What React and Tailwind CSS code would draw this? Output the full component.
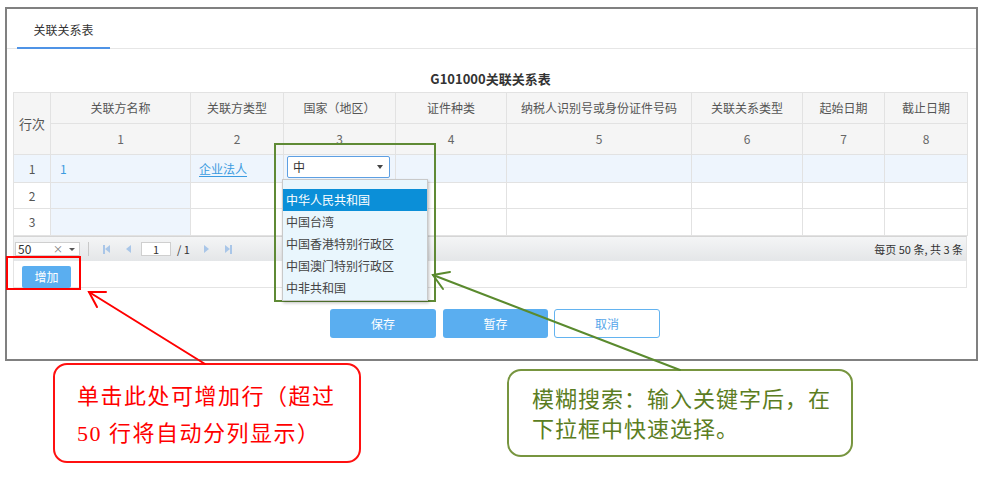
import React from "react";

const columns = [
  { name: "关联方名称", no: 1 },
  { name: "关联方类型", no: 2 },
  { name: "国家（地区）", no: 3 },
  { name: "证件种类", no: 4 },
  { name: "纳税人识别号或身份证件号码", no: 5 },
  { name: "关联关系类型", no: 6 },
  { name: "起始日期", no: 7 },
  { name: "截止日期", no: 8 },
];

const widths = [37, 140, 93, 112, 111, 185, 111, 82, 83];

const countries = ["中华人民共和国", "中国台湾", "中国香港特别行政区", "中国澳门特别行政区", "中非共和国"];

const cell = "border border-[#e2e2e2]";

function CountryPicker() {
  return (
    <td className={`${cell} relative align-top pt-[1px] pl-[3px]`}>
      <div className="flex items-center justify-between w-[103px] h-[22px] border border-[#5d9fe2] rounded-[2px] bg-white pl-[5px] pr-[6px] text-[12px] text-[#333]">
        <span>中</span>
        <span className="w-0 h-0 border-x-[3px] border-x-transparent border-t-[4px] border-t-[#444]" />
      </div>
      {/* options list */}
      <div className="absolute left-[-2px] top-[24px] z-10 w-[146px] bg-[#e9f6fd] border border-[#c9c9c9] shadow-[1px_2px_3px_rgba(0,0,0,0.25)] pt-[9px] pb-[1px]">
        {countries.map((c, i) => (
          <div
            key={c}
            className={`h-[22px] flex items-center pl-[3px] text-[12px] ${
              i === 0 ? "bg-[#0b8fd8] text-white" : "text-[#444]"
            }`}
          >
            {c}
          </div>
        ))}
      </div>
    </td>
  );
}

function Pager() {
  return (
    <div className="h-[25px] flex items-center justify-between bg-gradient-to-b from-[#f4f5f6] to-[#e4e6e8] border-t border-[#d5d5d5] border-x border-x-[#e2e2e2]">
      <div className="flex items-center">
        <div className="ml-[1px] w-[65px] h-[14px] bg-white border border-[#cfcfcf] flex items-center text-[12px] text-[#333] leading-none">
          <span className="pl-[2px] flex-1">50</span>
          <span className="text-[10px] text-[#777] mr-[6px]">×</span>
          <span className="w-0 h-0 border-x-[3px] border-x-transparent border-t-[3px] border-t-[#555] mr-[4px]" />
        </div>
        <div className="ml-[8px] w-px h-[14px] bg-[#c8c8c8]" />
        <div className="ml-[14px] flex items-center">
          <span className="w-[2px] h-[9px] bg-[#a9c6e8]" />
          <span className="w-0 h-0 border-y-[4.5px] border-y-transparent border-r-[5px] border-r-[#a9c6e8]" />
        </div>
        <span className="ml-[16px] w-0 h-0 border-y-[4.5px] border-y-transparent border-r-[5px] border-r-[#a9c6e8]" />
        <div className="ml-[10px] w-[30px] h-[14px] bg-white border border-[#cfcfcf] flex items-center justify-center text-[11px] text-[#333] leading-none">
          1
        </div>
        <span className="ml-[6px] text-[11px] text-[#333]">/ 1</span>
        <span className="ml-[14px] w-0 h-0 border-y-[4.5px] border-y-transparent border-l-[5px] border-l-[#a9c6e8]" />
        <div className="ml-[16px] flex items-center">
          <span className="w-0 h-0 border-y-[4.5px] border-y-transparent border-l-[5px] border-l-[#a9c6e8]" />
          <span className="w-[2px] h-[9px] bg-[#a9c6e8]" />
        </div>
      </div>
      <span className="pr-[3px] text-[11px] text-[#333]">每页 50 条, 共 3 条</span>
    </div>
  );
}

function RelationTable() {
  return (
    <div className="ml-[6px] w-[954px]">
      <table className="table-fixed border-collapse w-[954px] text-[12px]">
        <colgroup>
          {widths.map((w, i) => (
            <col key={i} style={{ width: w }} />
          ))}
        </colgroup>
        <thead>
          <tr className="h-[31px] bg-[#f5f5f5] text-[#555]">
            <th rowSpan={2} className={`${cell} font-normal text-[13px]`}>行次</th>
            {columns.map((c) => (
              <th key={c.no} className={`${cell} font-normal`}>{c.name}</th>
            ))}
          </tr>
          <tr className="h-[31px] bg-[#f5f5f5] text-[#666]">
            {columns.map((c) => (
              <th key={c.no} className={`${cell} font-normal`}>{c.no}</th>
            ))}
          </tr>
        </thead>
        <tbody>
          <tr className="h-[28px] bg-[#eef5fd]">
            <td className={`${cell} text-center text-[#555]`}>1</td>
            <td className={`${cell} pl-[9px] text-[#3b9be0]`}>1</td>
            <td className={`${cell} pl-[8px]`}>
              <span className="text-[#3b9be0] underline underline-offset-2">企业法人</span>
            </td>
            <CountryPicker />
            <td className={cell} />
            <td className={cell} />
            <td className={cell} />
            <td className={cell} />
            <td className={cell} />
          </tr>
          {[2, 3].map((n) => (
            <tr key={n} className={n === 2 ? "h-[26px]" : "h-[27px]"}>
              <td className={`${cell} text-center text-[#555]`}>{n}</td>
              <td className={`${cell} bg-[#eef5fd]`} />
              {[0, 1, 2, 3, 4, 5, 6].map((k) => (
                <td key={k} className={cell} />
              ))}
            </tr>
          ))}
        </tbody>
      </table>
      <Pager />
      <div className="h-[27px] border border-t-0 border-[#e4e4e4] pl-[8px] pt-[2px]">
        <button className="w-[49px] h-[22px] rounded-[2px] bg-[#5aaef0] text-white text-[12px]">增加</button>
      </div>
    </div>
  );
}

export default function App() {
  return (
    <div className="relative w-[986px] h-[477px] bg-white overflow-hidden font-['Noto_Sans_CJK_SC',sans-serif]">
      {/* form window */}
      <div className="ml-[5px] mt-[7px] w-[973px] h-[354px] border-2 border-[#808080]">
        <div className="h-[40px] border-b border-[#e6e6e6] flex">
          <div className="ml-[10px] w-[93px] h-[40px] -mb-px border-b-2 border-[#4f93e6] flex items-center justify-center pt-[3px] text-[12px] text-[#333]">
            关联关系表
          </div>
        </div>
        <div className="h-[43px] flex items-end justify-center pb-[5px] pr-[2px] text-[13px] leading-[16px] font-bold text-[#333]">
          G101000关联关系表
        </div>
        <RelationTable />
        <div className="mt-[21px] pl-[323px] flex text-[12px]">
          <button className="w-[106px] h-[29px] rounded-[3px] bg-[#5aaef0] text-white">保存</button>
          <button className="ml-[7px] w-[105px] h-[29px] rounded-[3px] bg-[#5aaef0] text-white">暂存</button>
          <button className="ml-[6px] w-[106px] h-[29px] rounded-[3px] bg-white border border-[#63b3f0] text-[#56a6ea]">取消</button>
        </div>
      </div>

      {/* callouts */}
      <div className="flex items-start">
        <div className="ml-[53px] mt-[2px] w-[308px] h-[100px] border-2 border-[#ff1010] rounded-[14px] pl-[22px] pt-[13px] text-[22px] leading-[37px] tracking-[1.5px] text-[#ff0000] font-['Liberation_Serif','Noto_Sans_CJK_SC',serif]">
          单击此处可增加行（超过
          <br />
          50 行将自动分列显示）
        </div>
        <div className="ml-[146px] mt-[8px] w-[346px] h-[88px] border-2 border-[#77953f] rounded-[14px] pl-[23px] pt-[14px] text-[22px] leading-[30px] tracking-[1px] text-[#5b7d22] font-['Liberation_Serif','Noto_Sans_CJK_SC',serif]">
          模糊搜索：输入关键字后，在
          <br />
          下拉框中快速选择。
        </div>
      </div>

      {/* highlight boxes */}
      <div className="absolute left-[6px] top-[256px] w-[75px] h-[34px] border-2 border-[#ff0000]" />
      <div className="absolute left-[274px] top-[143px] w-[162px] h-[159px] border-2 border-[#5f8a35]" />

      {/* pointer arrows */}
      <svg className="absolute inset-0 pointer-events-none" width="986" height="477" viewBox="0 0 986 477" fill="none">
        <g stroke="#ff0000" strokeWidth="2" strokeLinecap="round">
          <line x1="205" y1="364" x2="89" y2="292" />
          <polyline points="106,292 89,292 97,307" />
        </g>
        <g stroke="#5a8a2e" strokeWidth="2" strokeLinecap="round">
          <line x1="680" y1="370" x2="433" y2="275" />
          <polyline points="450,272 433,275 443,289" />
        </g>
      </svg>
    </div>
  );
}
